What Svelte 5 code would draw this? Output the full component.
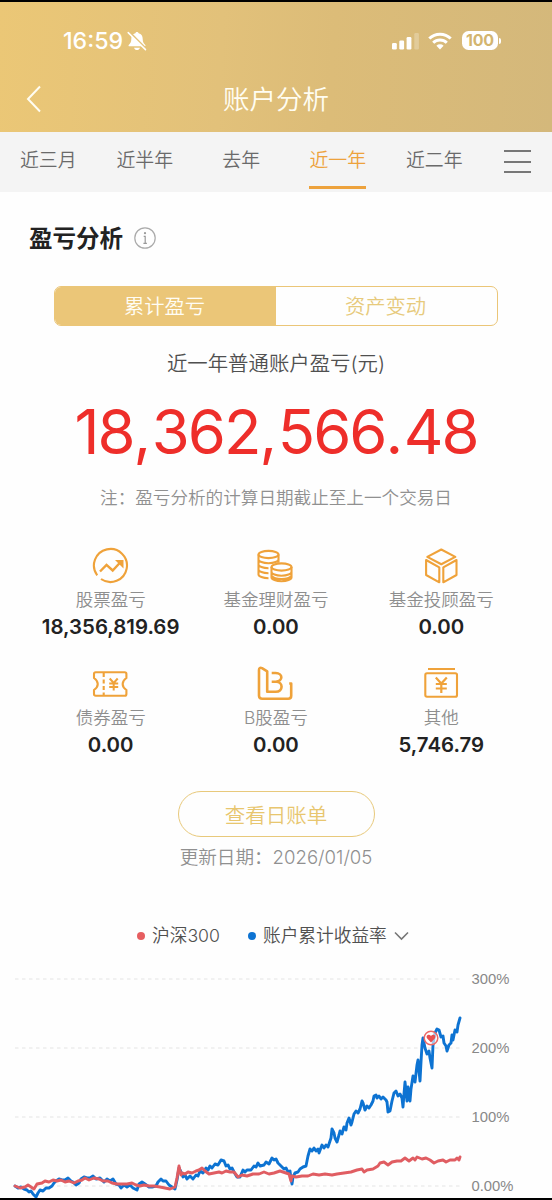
<script>
  const tabs = ['近三月', '近半年', '去年', '近一年', '近二年'];
  let activeTab = $state('近一年');

  const stats = [
    { icon: 'stock', label: '股票盈亏', value: '18,356,819.69' },
    { icon: 'coins', label: '基金理财盈亏', value: '0.00' },
    { icon: 'cube', label: '基金投顾盈亏', value: '0.00' },
    { icon: 'bond', label: '债券盈亏', value: '0.00' },
    { icon: 'bshare', label: 'B股盈亏', value: '0.00' },
    { icon: 'other', label: '其他', value: '5,746.79' }
  ];

  const axis = [
    { y: 19, label: '300%' },
    { y: 88, label: '200%' },
    { y: 157, label: '100%' },
    { y: 226, label: '0.00%' }
  ];

  const account =
    '15,226 18,228 21,227 24,229 27,230 29,232 31,231 33,234 36,237 38,233 40,230 43,231 46,228 49,228 52,226 54,223 56,221 59,219 62,220 65,220 68,218 71,221 73,222 76,225 79,223 81,219 84,217 87,218 90,218 93,216 96,219 100,218 104,222 107,219 110,221 113,219 116,224 119,225 121,228 124,225 127,227 130,225 133,228 137,230 139,224 142,222 145,224 149,227 152,227 156,226 158,222 161,219 163,221 166,221 169,225 172,227 175,229 177,220 179,208 181,212 183,217 185,215 187,219 190,216 193,219 196,215 198,216 200,211 203,213 206,208 208,210 210,206 212,208 215,204 218,205 221,200 224,201 226,206 228,205 230,209 232,208 234,212 237,217 240,217 243,210 245,212 247,210 251,210 254,206 256,207 258,203 260,206 264,205 266,202 269,204 272,198 274,200 276,199 278,203 280,205 284,209 286,208 288,212 290,211 291,219 292,224 293,217 295,213 298,212 300,209 303,207 306,206 308,196 310,189 312,191 314,188 316,191 318,189 319,193 322,185 324,188 326,185 328,187 330,181 331,178 332,169 334,173 335,178 337,182 339,175 340,171 342,174 344,167 346,170 347,163 349,158 351,165 352,162 354,154 356,151 358,153 360,149 362,141 363,143 365,150 367,146 369,148 371,145 373,141 374,136 376,135 377,138 379,136 381,139 383,137 386,140 387,142 388,152 390,151 392,141 394,133 396,131 398,136 400,134 402,138 403,147 404,134 405,122 407,141 408,127 410,141 411,129 413,116 415,122 417,105 418,100 420,121 421,102 422,85 423,78 425,88 427,94 429,91 430,98 432,108 433,85 434,78 435,73 437,69 439,70 441,77 443,76 444,83 446,86 447,91 449,85 451,83 452,75 453,80 455,70 457,72 458,65 460,58';

  const index =
    '15,226 20,228 25,227 28,225 31,227 34,229 37,224 42,223 45,221 49,222 53,220 57,221 61,220 65,222 69,221 74,223 78,221 82,220 85,218 89,220 94,218 99,219 103,221 108,221 112,223 117,224 122,224 127,224 132,223 136,225 140,226 144,225 149,226 154,226 160,227 165,228 170,229 175,227 177,218 179,206 181,215 182,213 185,214 188,212 192,213 196,211 199,210 202,208 205,211 209,214 214,213 219,212 222,213 226,211 230,212 234,212 238,217 242,215 247,216 253,214 259,214 264,212 269,214 274,213 280,211 286,213 289,214 291,221 292,216 296,217 302,216 308,216 313,214 319,215 325,214 332,215 337,214 344,213 351,212 357,210 362,209 364,212 367,210 373,209 378,206 380,203 384,202 388,205 392,202 397,201 401,201 405,198 409,201 413,198 415,200 417,197 422,199 426,198 430,200 434,203 438,201 443,200 446,202 450,200 455,200 457,198 459,200 460,197';
</script>

<div class="screen">
  <header>
    <div class="status">
      <div class="clock">
        <span>16:59</span>
        <svg width="20" height="20" viewBox="0 0 20 20">
          <path d="M10 1c-.9 0-1.500.6-1.600 1.300C5.500 3 4.300 5 4.300 8c0 3.300-.9 4.300-2.600 6-.4.700-.1 1.300.7 1.300h15.200c.8 0 1.100-.6.700-1.300-1.700-1.700-2.600-2.700-2.600-6 0-3-1.200-5-4.100-5.700C11.500 1.600 10.900 1 10 1zM7 16.700c.6 1.600 1.600 2.300 3 2.300s2.400-.7 3-2.300z" fill="#fff" />
          <path d="M2.600 1.300l17 17" stroke="#e4c37a" stroke-width="2" />
          <path d="M1.200 1.600l17.300 17" stroke="#fff" stroke-width="1.500" stroke-linecap="round" />
        </svg>
      </div>
      <div class="signals">
        <svg width="29" height="18" viewBox="0 0 29 18" fill="#fff">
          <rect x="1" y="11" width="4.800" height="6.500" rx="1.200" />
          <rect x="8.300" y="8.500" width="4.800" height="9" rx="1.200" />
          <rect x="15.600" y="5" width="4.800" height="12.500" rx="1.200" />
          <rect x="23.300" y="1" width="4.600" height="16.500" rx="1.200" opacity=".25" />
        </svg>
        <svg width="24" height="18" viewBox="0 0 24 18" fill="none" stroke="#fff" stroke-width="3">
          <path d="M1.300 6.500a15.300 15.300 0 0 1 21.400 0" />
          <path d="M5.200 10.700a9.700 9.700 0 0 1 13.600 0" />
          <path d="M12 17.500l-3.600-3.700a5.200 5.200 0 0 1 7.200 0z" fill="#fff" stroke="none" />
        </svg>
        <div class="battery"><b>100</b><i></i></div>
      </div>
    </div>
    <div class="nav">
      <svg width="16" height="28" viewBox="0 0 16 28"><path d="M14 1.500L2 14l12 12.500" fill="none" stroke="#fffdf2" stroke-width="2" /></svg>
      <h1>账户分析</h1>
    </div>
  </header>

  <nav class="tabs">
    {#each tabs as tab}
      <button class:active={tab === activeTab} onclick={() => (activeTab = tab)}><span>{tab}</span></button>
    {/each}
    <button class="menu" aria-label="菜单"><i></i><i></i><i></i></button>
  </nav>

  <main>
    <div class="heading">
      <h2>盈亏分析</h2>
      <svg width="22" height="22" viewBox="0 0 22 22">
        <circle cx="11" cy="11" r="10.200" fill="none" stroke="#aaa" stroke-width="1.200" />
        <circle cx="11" cy="6.200" r="1.100" fill="#999" />
        <path d="M9.700 9.400h1.500v6.800M9.400 16.300h3.500" fill="none" stroke="#999" stroke-width="1.200" />
      </svg>
    </div>

    <div class="segments">
      <button class="on">累计盈亏</button>
      <button>资产变动</button>
    </div>

    <p class="caption">近一年普通账户盈亏(元)</p>
    <p class="total">18<span>,</span>362<span>,</span>566<span>.</span>48</p>
    <p class="note">注：盈亏分析的计算日期截止至上一个交易日</p>

    <section class="stats">
      {#each stats as s}
        <div class="stat">
          <svg width="38" height="38" viewBox="0 0 38 38" fill="none" stroke="#efa23a" stroke-width="2.100">
            {#if s.icon === 'stock'}
              <path d="M5.200 28.300A16.500 16.500 0 1 1 9 32" />
              <path d="M6.300 29l2.300 2.300" stroke="#fefefe" stroke-width="3" />
              <path d="M8 24.500l6.500-6.700 6.200 5.700 7-7.500" stroke-width="2.400" />
              <path d="M23 13h8.500v8.500z" fill="#efa23a" stroke="none" />
            {:else if s.icon === 'coins'}
              <ellipse cx="11.500" cy="7.500" rx="10" ry="3.600" />
              <path d="M1.500 7.500v20c0 2 4.500 3.700 10 3.700M21.500 7.500v8.300M1.500 12.500c0 2 4.500 3.700 10 3.700s10-1.700 10-3.700M1.500 17.500c0 2 4.500 3.700 10 3.700M1.500 22.500c0 2 4.500 3.700 10 3.700" />
              <ellipse cx="24.500" cy="20" rx="10" ry="3.600" />
              <path d="M14.500 20v10.500c0 2 4.500 3.700 10 3.700s10-1.700 10-3.700V20M14.500 25c0 2 4.500 3.700 10 3.700s10-1.700 10-3.700M15 29c1 2 5 3 9.500 3s8.500-1 9.500-3" />
            {:else if s.icon === 'cube'}
              <path d="M19.300 2.500l14 7.400-14 7.400-14-7.400z" stroke-linejoin="round" />
              <path d="M4.100 13l13.200 7.300v15L4.100 28zM34.500 13l-13.200 7.300v15L34.500 28z" stroke-linejoin="round" />
            {:else if s.icon === 'bond'}
              <path d="M3.700 7.200h29q1.700 0 1.700 1.800v4c-5 3.500-5 8.500 0 12v4q0 1.800-1.700 1.800h-29q-1.700 0-1.700-1.800v-4c5-3.500 5-8.500 0-12V9q0-1.800 1.700-1.800z" />
              <path d="M11.700 8v22" stroke-dasharray="4 2.500" />
              <path d="M17.700 13.500l4 4.500 4-4.500M21.700 18v7.500M17.200 18.500h9M17.200 22h9" stroke-width="2" />
            {:else if s.icon === 'bshare'}
              <path d="M33 18.500h2v12.200q0 3-3 3H6q-3.200 0-3.200-3V5q0-3 3-1.900l5.200 3.200v20.500h8.500c8 0 7.500-10 .500-10h-4.500M15.500 8h4c7.500 0 7.500 8.700 0 8.700" transform="translate(-.8 0)" stroke-width="2.600" stroke-linejoin="round" />
            {:else}
              <path d="M6 4h27M5 8.200h28.300q1.700 0 1.700 1.800v20q0 1.800-1.700 1.800H5Q3.300 31.800 3.300 30V10q0-1.800 1.700-1.800z" />
              <path d="M13.800 12.500l5.500 6 5.500-6M19.300 18.500v9.500M13.800 19h11M13.800 23.500h11" stroke-width="2.200" />
            {/if}
          </svg>
          <span class="label">{s.label}</span>
          <strong>{s.value}</strong>
        </div>
      {/each}
    </section>

    <button class="bill">查看日账单</button>
    <p class="updated">更新日期：<span>2026/01/05</span></p>

    <div class="legend">
      <div><i class="red"></i>沪深300</div>
      <div>
        <i class="blue"></i>账户累计收益率
        <svg width="15" height="10" viewBox="0 0 15 10"><path d="M1 1.500l6.500 6.500L14 1.500" fill="none" stroke="#777" stroke-width="1.600" /></svg>
      </div>
    </div>

    <svg class="chart" width="552" height="238" viewBox="0 0 552 238">
      {#each axis as a}
        <line x1="15" x2="461" y1={a.y} y2={a.y} stroke="#e4e4e4" stroke-dasharray="3.500 3.500" />
        <text x="471.500" y={a.y + 5}>{a.label}</text>
      {/each}
      <g fill="none" stroke-width="2.900" stroke-linejoin="round" stroke-linecap="round">
        <polyline points={account} stroke="#0d73d2" />
        <polyline points={index} stroke="#e05d62" />
      </g>
      <circle cx="431" cy="78" r="6.800" fill="#fff" fill-opacity=".6" stroke="#ed6867" stroke-width="1.500" />
      <path d="M431 82.500l-4-4.300c-1.600-2.500 2-4.700 4-2.300 2-2.400 5.600-.2 4 2.300z" fill="#e94f50" />
    </svg>
  </main>
</div>

<style>
  :global(body) { margin: 0; background: #fefefe; }
  .screen {
    box-sizing: border-box;
    width: 552px;
    height: 1200px;
    overflow: hidden;
    border-top: 2px solid #000;
    border-bottom: 2px solid #000;
    background: #fefefe;
    font-family: Inter, 'Noto Sans CJK SC', sans-serif;
    font-weight: 350;
    color: #555;
  }
  h1, h2, p { margin: 0; }
  button { border: 0; padding: 0; background: none; font: inherit; color: inherit; }
  header { height: 130px; background: linear-gradient(93deg, #ebc776 0%, #e2c17a 40%, #dcbc78 60%, #d4b87b 100%); }
  .status { display: flex; justify-content: space-between; align-items: center; height: 76px; padding: 1px 51px 0 63px; box-sizing: border-box; color: #fff; }
  .clock { display: flex; align-items: center; gap: 4px; font-size: 23.200px; font-weight: 500; }
  .signals { display: flex; align-items: center; gap: 8px; }
  .battery { display: flex; align-items: center; margin-left: 2px; }
  .battery b { width: 36px; height: 19px; border-radius: 6.500px; background: #fff; color: #d3b56f; font-size: 16px; line-height: 19px; font-weight: 700; text-align: center; letter-spacing: -.2px; }
  .battery i { width: 2px; height: 6px; margin-left: 1px; border-radius: 0 3px 3px 0; background: #fff; }
  .nav { display: grid; grid-template-columns: 60px 1fr 60px; align-items: center; height: 42px; color: #fffdf2; }
  .nav svg { margin-left: 26px; }
  h1 { font-size: 26.500px; line-height: 40px; font-weight: 350; text-align: center; }
  .tabs { display: flex; height: 60px; background: #f4f4f4; font-size: 18.900px; color: #6a6a6a; }
  .tabs button { display: flex; justify-content: center; width: 96.500px; height: 57px; }
  .tabs span { box-sizing: border-box; height: 57px; line-height: 57px; border-bottom: 3px solid transparent; }
  .tabs .active span { color: #eda23c; border-color: #eda23c; }
  .tabs .menu { flex-direction: column; justify-content: flex-start; gap: 8.500px; width: 27px; padding-top: 18px; margin-left: 21px; }
  .menu i { height: 2px; background: #777; }
  main { display: flex; flex-direction: column; }
  .heading { display: flex; align-items: center; gap: 11px; height: 40px; margin: 26px 0 0 29px; }
  h2 { font-size: 23.500px; line-height: 40px; padding-top: 1px; font-weight: 700; color: #222; }
  .segments { box-sizing: border-box; display: grid; grid-template-columns: 1fr 1fr; width: 444px; height: 40px; margin: 28px 0 0 54px; border: 1.500px solid #ebc678; border-radius: 7px; overflow: hidden; font-size: 20.300px; color: #e7ca7c; }
  .segments button { padding: 0 2px 3px 0; }
  .segments .on { background: #ebc678; color: #fffdf5; }
  .caption { margin-top: 22px; font-size: 20.400px; line-height: 32px; text-align: center; color: #505050; }
  .total { margin-top: 16px; height: 71px; line-height: 71px; font-size: 61.500px; font-weight: 400; text-align: center; color: #ee2e2a; letter-spacing: -2px; }
  .total span { letter-spacing: .6px; }
  .note { margin-top: 17px; font-size: 17.600px; line-height: 28px; text-align: center; color: #909090; }
  .stats { display: grid; grid-template-columns: repeat(3, 165.300px); grid-auto-rows: 118px; margin: 35px 0 0 28px; }
  .stat { display: flex; flex-direction: column; align-items: center; }
  .label { margin-top: 2px; font-size: 17.500px; line-height: 26px; color: #8e8e8e; }
  .stat strong { font-size: 20.400px; line-height: 27px; font-weight: 600; color: #222; }
  .bill { box-sizing: border-box; width: 197px; height: 46px; margin: 8px 0 0 177.500px; border: 1.500px solid #e8c97b; border-radius: 23px; font-size: 20.500px; color: #e8c66f; }
  .updated { margin-top: 7px; font-size: 18.600px; line-height: 26px; text-align: center; color: #909090; }
  .legend { display: flex; gap: 28px; height: 26px; margin: 53px 0 0 137px; font-size: 17.700px; line-height: 26px; color: #505050; }
  .legend div { display: flex; align-items: center; gap: 7px; }
  .legend i { width: 8px; height: 8px; border-radius: 50%; }
  .red { background: #e65e60; }
  .blue { background: #0d73d2; }
  .chart { display: block; margin-top: 11px; }
  .chart text { font-family: 'Liberation Sans', Arial, sans-serif; font-size: 14.800px; fill: #888; }
</style>
